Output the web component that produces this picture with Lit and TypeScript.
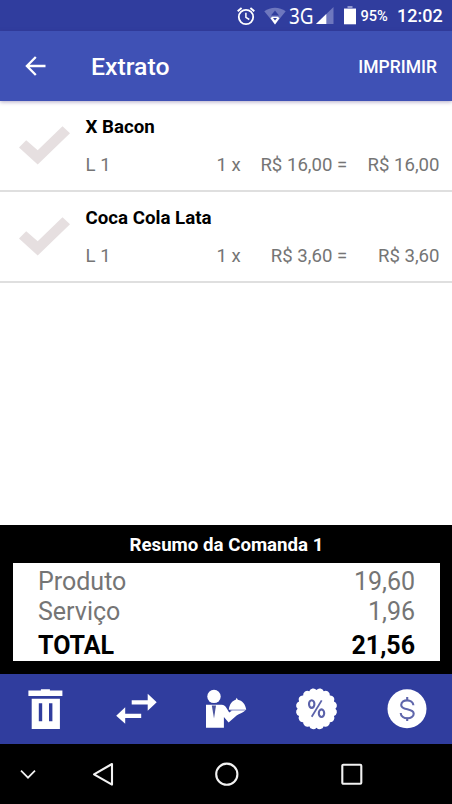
import { LitElement, html, css, svg } from "lit";
import { customElement } from "lit/decorators.js";

interface Item {
  name: string;
  place: string;
  qty: string;
  price: string;
  total: string;
}

const items: Item[] = [
  { name: "X Bacon", place: "L 1", qty: "1 x", price: "R$ 16,00 =", total: "R$ 16,00" },
  { name: "Coca Cola Lata", place: "L 1", qty: "1 x", price: "R$ 3,60 =", total: "R$ 3,60" },
];

/* Scalloped outline of the discount seal. */
function sealPath(cx: number, cy: number, radius: number, lobes: number): string {
  const point = (a: number) =>
    `${(cx + radius * Math.cos(a)).toFixed(2)} ${(cy + radius * Math.sin(a)).toFixed(2)}`;
  const step = (2 * Math.PI) / lobes;
  let d = `M${point(-Math.PI / 2)}`;
  for (let i = 0; i < lobes; i++) {
    d += `A4.2 4.2 0 0 1 ${point(-Math.PI / 2 + (i + 1) * step)}`;
  }
  return d + "Z";
}

@customElement("status-bar")
export class StatusBar extends LitElement {
  static styles = css`
    :host {
      display: flex;
      align-items: center;
      justify-content: flex-end;
      height: 31px;
      padding-right: 10px;
      box-sizing: border-box;
      background: #303d9e;
      color: #fff;
      font-weight: 500;
      line-height: 32px;
      white-space: nowrap;
    }
    svg { display: block; flex: none; }
    .alarm { margin-right: 7.5px; }
    .net {
      font-family: "Noto Sans", sans-serif;
      font-weight: 400;
      font-size: 22.5px;
      width: 24px;
      margin-left: 3px;
      transform: scaleX(0.84);
      transform-origin: left center;
    }
    .signal { margin: 0 10px 0 3px; }
    .pct { font-size: 14.6px; width: 28px; margin-left: 5px; }
    .clock { font-size: 18px; width: 45px; margin-left: 8.5px; }
  `;
  render() {
    return html`
      <svg class="alarm" width="20" height="20" viewBox="0 0 20 20" fill="none" stroke="#fff">
        <circle cx="10" cy="11" r="7.2" stroke-width="1.8" />
        <path d="M1.7 5.2 5.6 1.9M18.3 5.2 14.4 1.9" stroke-width="1.9" />
        <path d="M9.9 6.8v4.6l3.4 2.1" stroke-width="1.5" />
      </svg>
      <svg width="22" height="18" viewBox="0 0 22 18">
        <path d="M0.3 4.3C6.5-.6 15.5-.6 21.7 4.3L11 17.6Z" fill="#6e77be" />
        <path d="M11 3.4 15 8.6H7Z" fill="#303d9e" />
        <path d="M6.5 11.2 8.2 9.8h5.6l1.7 1.4L11 17.4Z" fill="#fff" />
        <path d="M9 11h4L11 13.4Z" fill="#303d9e" />
      </svg>
      <span class="net">3G</span>
      <svg class="signal" width="18" height="17" viewBox="0 0 18 17">
        <path d="M17.5 0V17H0Z" fill="#6e77be" />
        <path d="M10.3 7V17H0Z" fill="#fff" />
      </svg>
      <svg width="12" height="19" viewBox="0 0 12 19">
        <path d="M3.5 0h5v2H12v3H0V2h3.5Z" fill="#8f96ce" />
        <path d="M0 3h12v15.3H0Z" fill="#fff" />
      </svg>
      <span class="pct">95%</span>
      <span class="clock">12:02</span>
    `;
  }
}

@customElement("app-bar")
export class AppBar extends LitElement {
  static styles = css`
    :host {
      display: flex;
      align-items: center;
      height: 69.5px;
      padding: 0 15px 0 25px;
      box-sizing: border-box;
      background: #3f51b5;
      color: #fff;
      font-weight: 500;
      box-shadow: 0 1px 4px rgba(60, 40, 110, 0.4);
      position: relative;
    }
    .title { flex: 1; margin-left: 45px; padding-top: 2px; font-size: 24.8px; line-height: 30px; }
    .action { padding-top: 3px; font-size: 17.5px; line-height: 22px; }
  `;
  render() {
    return html`
      <svg width="21" height="20" viewBox="0 0 21 20" fill="none" stroke="#fff" stroke-width="2.3">
        <path d="M20.5 10H2.2M10.8 1 1.9 10l8.9 9" />
      </svg>
      <span class="title">Extrato</span>
      <span class="action">IMPRIMIR</span>
    `;
  }
}

@customElement("order-list")
export class OrderList extends LitElement {
  static styles = css`
    :host { display: block; flex: 1; background: #fff; }
    .row {
      display: grid;
      grid-template-columns: 85.5px 1fr;
      height: 91.2px;
      box-sizing: border-box;
      border-bottom: 2.6px solid #dfdfdf;
      padding-right: 12.5px;
    }
    .mark { padding: 24px 0 0 19px; }
    .mark svg { display: block; }
    .name { margin-top: 16.5px; font-size: 18.7px; line-height: 20px; font-weight: 700; color: #000; }
    .figures {
      display: grid;
      grid-template-columns: 1fr 106.5px 92.3px;
      margin-top: 16px;
      font-size: 18.6px;
      line-height: 24px;
      color: #757575;
      text-align: right;
    }
    .where { display: flex; justify-content: space-between; }
  `;
  render() {
    return items.map(
      (i) => html`
        <div class="row">
          <div class="mark">
            <svg width="52" height="40" viewBox="0 0 52 40">
              <path d="M0 22.5 7.2 15.3 18.7 25.3 43.5 1.3 51 8.3 18.7 39.5Z" fill="#e6dfe0" />
            </svg>
          </div>
          <div>
            <div class="name">${i.name}</div>
            <div class="figures">
              <span class="where"><span>${i.place}</span><span>${i.qty}</span></span>
              <span>${i.price}</span>
              <span>${i.total}</span>
            </div>
          </div>
        </div>
      `
    );
  }
}

@customElement("order-summary")
export class OrderSummary extends LitElement {
  static styles = css`
    :host {
      display: block;
      height: 148.6px;
      box-sizing: border-box;
      padding: 0 12px 0 13px;
      background: #000;
    }
    .heading { text-align: center; color: #fff; font-size: 18.7px; font-weight: 700; line-height: 40px; height: 38px; }
    .box { background: #fff; height: 97.6px; box-sizing: border-box; padding: 3.5px 25px 0 25px; font-size: 25px; color: #757575; }
    .line { display: flex; justify-content: space-between; line-height: 30px; }
    .total { font-weight: 700; color: #000; line-height: 37px; }
  `;
  render() {
    return html`
      <div class="heading">Resumo da Comanda 1</div>
      <div class="box">
        <div class="line"><span>Produto</span><span>19,60</span></div>
        <div class="line"><span>Serviço</span><span>1,96</span></div>
        <div class="line total"><span>TOTAL</span><span>21,56</span></div>
      </div>
    `;
  }
}

const toolIcons = [
  svg`<path transform="translate(3.4 0)" fill-rule="evenodd" d="M3 4.5H15.5V3.2h9V4.5H37v5.6H3ZM6.3 12.7H34.5V43H6.3ZM13.4 17.3v18h3.4v-18ZM23.6 17.3v18h3.4v-18Z" fill="#fff"/>`,
  svg`<path transform="translate(2.2 -.3)" d="M16.5 14.5H32.5V8L41.5 16.5 32.5 25V18.7H16.5ZM26 28H10V21.5L1 30 10 38V32.2H26Z" fill="#fff"/>`,
  svg`<circle cx="11" cy="10.4" r="6.7" fill="#fff"/>
    <path d="M3 18.8H18.5C21 19 22.6 20.2 23.5 21.9L26.2 26.4 29.6 24.3H42.6C39.6 27 36.3 27.6 33.6 29.6L25.6 36.6 20.9 31V41.8H3Z" fill="#fff"/>
    <path d="M8.8 19.6H13L11 32.4Z" fill="#4b549f"/>
    <path d="M25.8 23.8C26.4 18 29.4 14.8 32.7 13.8L33.7 11.8 34.8 13.7C39.2 14.4 42.5 18 43.2 23.8Z" fill="#fff"/>
    <path d="M27.5 24.3H42" stroke="#b3b7dc" stroke-width=".9"/>`,
  svg`<path d=${sealPath(23.5, 22.8, 18.9, 16)} fill="#fff"/>
    <g transform="translate(.7 -.4)" fill="none" stroke="#5b62aa" stroke-width="2.1"><ellipse cx="18" cy="18.5" rx="2.7" ry="3.8"/><ellipse cx="27.8" cy="27.6" rx="2.7" ry="3.8"/><path d="M28 14.8 18 31.2" stroke-width="1.8"/></g>`,
  svg`<circle cx="23" cy="22.7" r="19.5" fill="#fff"/>
    <g fill="none" stroke="#5f66ab" stroke-width="2.1"><path d="M23.2 11v3.6M23.2 31.5v3.6"/><path d="M29.4 19.2C29 12.9 17.3 12.7 17.2 19 17.1 25 29.6 21.6 29.7 27.7 29.7 34 17 33.7 16.7 27"/></g>`,
];

@customElement("tool-bar")
export class ToolBar extends LitElement {
  static styles = css`
    :host {
      display: grid;
      grid-template-columns: repeat(5, 1fr);
      justify-items: center;
      align-items: center;
      height: 70px;
      background: #303d9e;
    }
    svg { display: block; }
  `;
  render() {
    return toolIcons.map((icon) => html`<svg width="46" height="46" viewBox="0 0 46 46">${icon}</svg>`);
  }
}

@customElement("nav-bar")
export class NavBar extends LitElement {
  static styles = css`
    :host {
      display: grid;
      grid-template-columns: 56px 94px 151px 101px;
      justify-items: center;
      align-items: center;
      height: 60px;
      background: #000;
    }
    svg { display: block; fill: none; stroke: #f2f2f2; }
  `;
  render() {
    return html`
      <svg width="24" height="24" viewBox="0 0 24 24"><path d="M5 8.7 12 15.7 19 8.7" stroke-width="1.7" /></svg>
      <svg width="24" height="26" viewBox="0 0 24 26"><path d="M21 3V23.6L3 13.3Z" stroke-width="2.1" stroke-linejoin="round" /></svg>
      <svg width="26" height="26" viewBox="0 0 26 26"><circle cx="13.8" cy="13.2" r="10.6" stroke-width="2.1" /></svg>
      <svg width="26" height="26" viewBox="0 0 26 26"><rect x="3.3" y="3.8" width="19" height="19" rx="1" stroke-width="2.1" /></svg>
    `;
  }
}

@customElement("app-root")
export class AppRoot extends LitElement {
  static styles = css`
    :host {
      display: flex;
      flex-direction: column;
      width: 100%;
      height: 804px;
      overflow: hidden;
      background: #fff;
      font-family: Roboto, sans-serif;
    }
  `;
  render() {
    return html`
      <status-bar></status-bar>
      <app-bar></app-bar>
      <order-list></order-list>
      <order-summary></order-summary>
      <tool-bar></tool-bar>
      <nav-bar></nav-bar>
    `;
  }
}
